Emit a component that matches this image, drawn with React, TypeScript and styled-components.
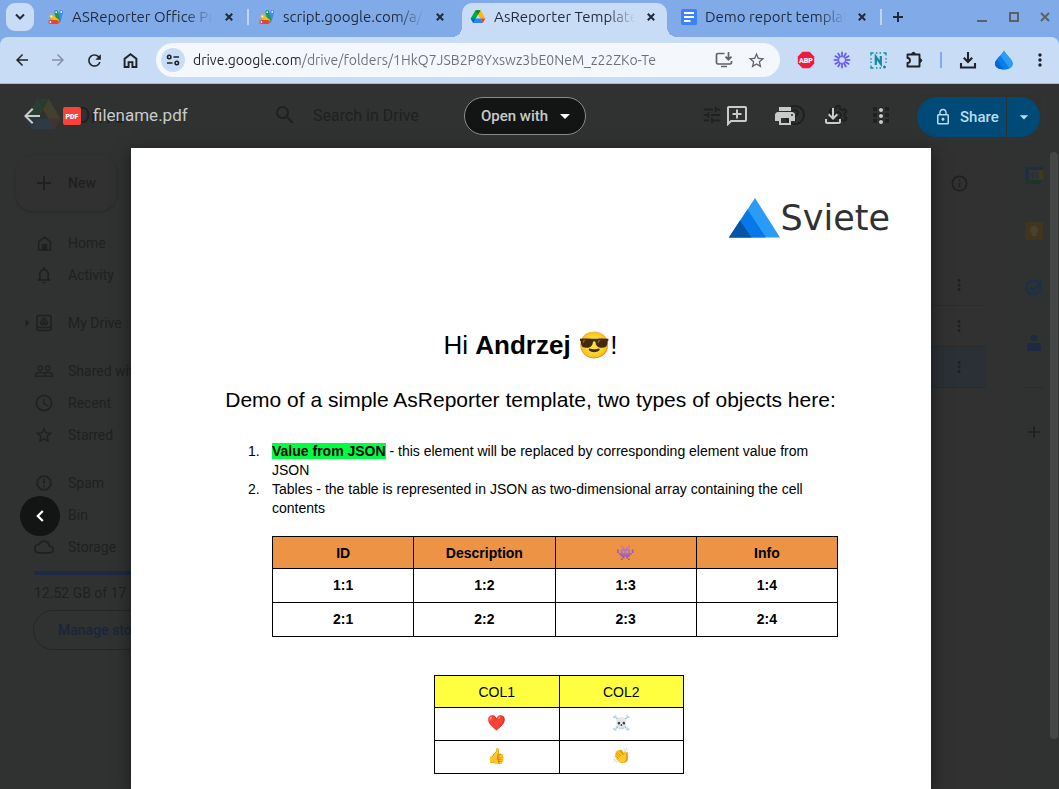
import React from "react";
import styled, { createGlobalStyle, css } from "styled-components";
import {
  MdAccessTime, MdAdd, MdApps, MdArrowBack, MdArrowDropDown, MdArrowForward, MdArrowRight,
  MdHelpOutline, MdInfoOutline, MdLockOutline, MdMoreVert, MdNotificationsNone, MdOutlineCloud,
  MdOutlineFileDownload, MdOutlineSettings, MdPeopleOutline, MdPrint, MdRefresh,
  MdReportGmailerrorred, MdSearch, MdStarBorder, MdTune,
} from "react-icons/md";

const uiFont = `"Ubuntu", "Noto Sans", "Open Sans", sans-serif`;
const appFont = `"Google Sans", Roboto, "Liberation Sans", sans-serif`;
const docFont = `Arial, "Liberation Sans", sans-serif`;

const GlobalStyle = createGlobalStyle`
  *, *::before, *::after { box-sizing: border-box; }
  body { margin: 0; background: #2f3231; }
  button, input { font: inherit; color: inherit; }
  button { padding: 0; border: 0; background: none; cursor: pointer; }
  svg { display: block; flex: none; }
`;

/* ---------- browser frame ---------- */

const Window = styled.div`
  display: flex;
  flex-direction: column;
  min-height: 100vh;
  overflow: hidden;
  background: #80abe8;
  font-family: ${uiFont};
`;

const TabStrip = styled.header`
  display: flex;
  align-items: flex-start;
  height: 37px;
  padding-left: 6px;
  color: #1f2a3c;
`;

const TabSearch = styled.button`
  display: grid;
  place-items: center;
  flex: none;
  width: 28px;
  height: 28px;
  margin: 3px 3px 0 0;
  border-radius: 9px;
  background: #c8dcf5;
`;

const Tab = styled.div<{ $active?: boolean; $divider?: boolean }>`
  position: relative;
  display: flex;
  align-items: center;
  gap: 8px;
  flex: 0 1 211px;
  min-width: 0;
  height: 34px;
  padding: 0 11px;
  margin-top: 3px;
  padding-bottom: 6px;
  ${(p) => p.$divider && css`
    &::after {
      content: "";
      position: absolute;
      right: -1px;
      top: 6px;
      width: 2px;
      height: 16px;
      background: #bdd4f4;
    }
  `}
  ${(p) => p.$active && css`
    margin-inline: 3px;
    flex-basis: 205px;
    padding-inline: 8px;
    border-radius: 10px 10px 0 0;
    background: #c8dcf5;
    &::before, &::after {
      content: "";
      position: absolute;
      bottom: 0;
      width: 10px;
      height: 10px;
    }
    &::before { left: -10px; background: radial-gradient(circle at 0 0, transparent 10px, #c8dcf5 10px); }
    &::after { right: -10px; background: radial-gradient(circle at 100% 0, transparent 10px, #c8dcf5 10px); }
  `}
`;

const TabTitle = styled.span`
  flex: 1;
  min-width: 0;
  overflow: hidden;
  white-space: nowrap;
  font-size: 15px;
  line-height: 20px;
  mask-image: linear-gradient(to right, #000 calc(100% - 28px), transparent);
`;

const TabClose = styled.button`
  display: grid;
  place-items: center;
  width: 16px;
  height: 16px;
`;

const NewTab = styled.button`
  display: grid;
  place-items: center;
  flex: none;
  width: 28px;
  height: 28px;
  margin: 3px 0 0 3px;
`;

const WindowButtons = styled.div`
  display: flex;
  flex: none;
  margin: 1px 0 0 auto;
  color: #5c6168;
  button { display: grid; place-items: center; width: 32px; height: 32px; }
  button:last-child { width: 29px; }
`;

const Toolbar = styled.div`
  display: flex;
  align-items: center;
  height: 47px;
  padding: 0 1px 0 4px;
  border-bottom: 1px solid #a4b7d1;
  border-radius: 8px 8px 0 0;
  background: #c8dcf5;
  color: #1f2227;
`;

const ToolButton = styled.button<{ $dim?: boolean }>`
  display: grid;
  place-items: center;
  flex: none;
  width: 36px;
  height: 34px;
  color: ${(p) => (p.$dim ? "#8592a8" : "inherit")};
`;

const Omnibox = styled.form`
  display: flex;
  align-items: center;
  flex: 1;
  min-width: 0;
  height: 34px;
  margin: 0 8px;
  padding: 0 8px 0 5px;
  border-radius: 17px;
  background: #f4f8fd;
  color: #5f6368;
`;

const SiteInfo = styled.button`
  display: grid;
  place-items: center;
  flex: none;
  width: 24px;
  height: 24px;
  margin-right: 8px;
  border-radius: 50%;
  background: #c8dcf5;
  color: #1f2227;
`;

const Address = styled.input`
  flex: 1;
  min-width: 0;
  padding: 0;
  border: 0;
  outline: 0;
  font-size: 14px;
  line-height: 20px;
  color: transparent;
  background: linear-gradient(to right, #1f2227 107px, #6b6f76 107px);
  background-clip: text;
`;

const OmniButton = styled.button`
  display: grid;
  place-items: center;
  flex: none;
  width: 32px;
  height: 24px;
`;

const ToolDivider = styled.span`
  width: 2px;
  height: 16px;
  margin: 0 8px;
  background: #80abe8;
`;

/* ---------- drive page behind the viewer ---------- */

const Content = styled.div`
  position: relative;
  display: flex;
  flex: 1;
  background: #2f3231;
  font-family: ${appFont};
`;

const Drive = styled.div`
  position: absolute;
  inset: 0;
  display: flex;
  flex-direction: column;
  overflow: hidden;
  color: #1f2020;
  font-size: 14px;
`;

const DriveHeader = styled.div`
  display: flex;
  align-items: center;
  height: 62px;
  margin-bottom: 2px;
  padding: 0 14px 0 24px;
`;

const DriveBrand = styled.div`
  display: flex;
  align-items: center;
  gap: 14px;
  width: 249px;
  font-size: 22px;
`;

const DriveSearch = styled.div`
  display: flex;
  align-items: center;
  gap: 16px;
  flex: 1;
  input {
    flex: 1;
    min-width: 0;
    padding: 0;
    border: 0;
    background: none;
    font-size: 16px;
  }
  input::placeholder { color: #1f2020; opacity: 1; }
`;

const DriveTools = styled.div`
  display: flex;
  gap: 19px;
  margin: 0 20px 0 60px;
`;

const Account = styled.div`
  width: 132px;
  height: 47px;
  border: 1px solid #353333;
  border-radius: 10px;
`;

const DriveBody = styled.div`
  display: flex;
  flex: 1;
`;

const Sidebar = styled.nav`
  width: 240px;
  padding: 7px 0 0 16px;
`;

const NewButton = styled.button`
  display: flex;
  align-items: center;
  gap: 12px;
  height: 56px;
  margin-bottom: 16px;
  padding: 0 20px 0 16px;
  border-radius: 16px;
  background: #323131;
  box-shadow: 0 1px 3px rgba(0, 0, 0, 0.2);
  font-weight: 500;
`;

const NavGroup = styled.div`
  margin-bottom: 16px;
`;

const NavItem = styled.a`
  display: flex;
  align-items: center;
  height: 32px;
  color: inherit;
  text-decoration: none;
  white-space: nowrap;
`;

const NavArrow = styled.span`
  display: grid;
  place-items: center;
  width: 18px;
  margin-left: 2px;
  margin-right: -2px;
`;

const NavIcon = styled.span`
  display: grid;
  place-items: center;
  width: 20px;
  margin-right: 14px;
`;

const StorageMeter = styled.div`
  height: 4px;
  margin: -8px 0 10px 18px;
  border-radius: 2px;
  background: #1c2a44;
`;

const StorageText = styled.p`
  margin: 0 0 8px 18px;
  line-height: 17px;
`;

const ManageButton = styled.button`
  height: 40px;
  margin-left: 17px;
  padding: 0 24px;
  border: 1px solid #252727;
  border-radius: 20px;
  color: #1b2538;
  font-weight: 500;
`;

const Files = styled.main`
  flex: 1;
  padding-right: 16px;
  border-radius: 16px;
  background: #313131;
`;

const FilesHead = styled.div`
  display: flex;
  justify-content: flex-end;
  align-items: center;
  height: 70px;
  padding-right: 17px;
  margin-bottom: 47px;
`;

const FileRow = styled.div<{ $selected?: boolean }>`
  display: flex;
  justify-content: flex-end;
  align-items: center;
  height: 41px;
  padding-right: 18px;
  border-bottom: 1px solid #2b2b2b;
  background: ${(p) => (p.$selected ? "#2b3036" : "transparent")};
`;

const Rail = styled.aside`
  display: flex;
  flex-direction: column;
  align-items: center;
  gap: 36px;
  width: 57px;
  padding: 17px 0 0 7px;
`;

const RailItem = styled.span`
  display: grid;
  place-items: center;
  width: 20px;
  height: 20px;
`;

const RailRule = styled.hr`
  width: 20px;
  margin: -2px 0;
  border: 0;
  border-top: 1px solid #2a2c2b;
`;

const ScrollThumb = styled.div`
  position: absolute;
  top: 68px;
  right: 1px;
  bottom: 51px;
  width: 8px;
  border-radius: 4px;
  background: #454746;
`;

/* ---------- pdf viewer ---------- */

const Viewer = styled.div`
  position: relative;
  display: flex;
  flex: 1;
  flex-direction: column;
  min-width: 0;
`;

const ViewerBar = styled.div`
  display: grid;
  grid-template-columns: 1fr auto 1fr;
  align-items: center;
  height: 64px;
  padding: 0 19px 0 10px;
  color: #c9cbca;
`;

const FileInfo = styled.div`
  display: flex;
  align-items: center;
  min-width: 0;
`;

const BackButton = styled.button`
  display: grid;
  place-items: center;
  width: 44px;
  height: 44px;
  margin-right: 9px;
`;

const FileName = styled.h1`
  margin: 0 0 2px 12px;
  font-size: 17px;
  line-height: 24px;
  font-weight: 400;
`;

const OpenWith = styled.button`
  display: flex;
  align-items: center;
  gap: 5px;
  height: 38px;
  padding: 0 8px 0 16px;
  border: 1px solid #8b8d8c;
  border-radius: 19px;
  background: #131414;
  font-size: 15px;
  font-weight: 500;
  svg { color: #fff; }
`;

const ViewerActions = styled.div`
  display: flex;
  align-items: center;
  justify-content: flex-end;
`;

const ActionButton = styled.button`
  display: grid;
  place-items: center;
  width: 48px;
  height: 40px;
`;

const ShareGroup = styled.div`
  display: flex;
  gap: 1px;
  height: 40px;
  margin: 2px 0 0 12px;
  color: #b9dcf5;
  font-size: 15px;
  font-weight: 500;
  button { display: flex; align-items: center; background: #004a77; }
`;

const ShareButton = styled.button`
  gap: 8px;
  width: 89px;
  padding-left: 17px;
  border-radius: 20px 0 0 20px;
`;

const ShareMenu = styled.button`
  justify-content: center;
  width: 33px;
  border-radius: 0 20px 20px 0;
`;

const PreviousFile = styled.button`
  position: absolute;
  top: 412px;
  left: 20px;
  display: grid;
  place-items: center;
  width: 40px;
  height: 40px;
  border-radius: 50%;
  background: #131414;
  color: #fff;
`;

const Stage = styled.div`
  display: flex;
  flex: 1;
  justify-content: center;
  padding-left: 3px;
`;

const Paper = styled.article`
  flex: 0 1 800px;
  min-width: 0;
  padding: 48px 41px 16px 40px;
  background: #fff;
  box-shadow: 0 4px 16px rgba(0, 0, 0, 0.5);
  color: #000;
  font-family: ${docFont};
`;

const Logo = styled.div`
  display: flex;
  align-items: flex-start;
  justify-content: flex-end;
  gap: 1px;
  height: 42px;
  color: #303133;
  font: 400 35px/44px "DejaVu Sans", sans-serif;
  svg { margin-top: 2px; }
`;

const Greeting = styled.h2`
  margin: 92px 0 0;
  text-align: center;
  font-size: 26px;
  line-height: 30px;
  font-weight: 400;
`;

const Lead = styled.p`
  margin: 28px 0 0;
  text-align: center;
  font-size: 21px;
  line-height: 24px;
`;

const Points = styled.ol`
  margin: 30px 50px 18px 77px;
  padding-left: 24px;
  list-style: none;
  counter-reset: point;
  font-size: 14px;
  line-height: 19px;
  li::before {
    counter-increment: point;
    content: counter(point) ".";
    display: inline-block;
    width: 24px;
    margin-left: -24px;
  }
  mark { background: #00ff40; color: inherit; font-weight: 700; }
`;

const Grid = styled.table<{ $head: string; $row: number; $bold?: boolean }>`
  border-collapse: collapse;
  table-layout: fixed;
  text-align: center;
  font-size: 14px;
  line-height: 20px;
  font-weight: ${(p) => (p.$bold ? 700 : 400)};
  th, td { height: ${(p) => p.$row}px; padding: 0; border: 1px solid #000; }
  td { padding-bottom: 2px; }
  th { height: 32px; background: ${(p) => p.$head}; font-weight: inherit; }
`;

const ReportTable = styled(Grid)`
  width: 566px;
  margin: 0 0 38px 101px;
`;

const EmojiTable = styled(Grid)`
  width: 250px;
  margin-left: 263px;
`;

const Emoji = styled.span<{ $size: number }>`
  font-family: "Noto Color Emoji", sans-serif;
  font-size: ${(p) => p.$size}px;
  font-weight: 400;
`;

/* ---------- drawings ---------- */

const AppsScriptIcon = () => (
  <svg width="16" height="16" viewBox="0 0 16 16">
    <path d="M13.3 3 10.8 11.8" stroke="#4285f4" strokeWidth="3.8" strokeLinecap="round" />
    <path d="M8.300 3.200 10.300 11" stroke="#109d58" strokeWidth="3.800" strokeLinecap="round" />
    <path d="M3.200 7.200 9.500 12" stroke="#fbbc04" strokeWidth="3.600" strokeLinecap="round" />
    <path d="M2.200 13h6.800" stroke="#ea4335" strokeWidth="3.800" strokeLinecap="round" />
    <g fill="#fff">
      <circle cx="13.300" cy="2.900" r=".9" /><circle cx="8.200" cy="3.200" r=".9" />
      <circle cx="3.400" cy="7.400" r=".9" /><circle cx="2.400" cy="13" r=".9" />
    </g>
  </svg>
);

const DriveIcon = ({ size = 16, dim = false }: { size?: number; dim?: boolean }) => (
  <svg width={size} height={size} viewBox="0 0 24 24" opacity={dim ? 0.1 : 1}>
    <path d="M8.2 2h7.6L8.6 14.4 4.8 21 1 14.4z" fill="#00ac47" />
    <path d="M8.2 2h7.6L23 14.4h-7.6z" fill="#ffba00" />
    <path d="M8.2 2h7.6L12 8.6z" fill="#00832d" />
    <path d="M4.8 21 8.6 14.4h6.8L19.2 21z" fill="#2684fc" />
    <path d="M15.4 14.4H23L19.2 21z" fill="#ea4335" />
    <path d="M1 14.4h7.6L4.8 21z" fill="#0066da" />
  </svg>
);

const DocsIcon = () => (
  <svg width="16" height="16" viewBox="0 0 16 16">
    <rect width="16" height="16" rx="1.5" fill="#3c82f4" />
    <path d="M3 4h10M3 8h10M3 12h6.5" stroke="#fff" strokeWidth="1.8" />
  </svg>
);

const CloseIcon = ({ size = 8, weight = 2 }: { size?: number; weight?: number }) => (
  <svg width={size} height={size} viewBox="0 0 8 8">
    <path d="m.8.8 6.4 6.4m0-6.4L.8 7.2" stroke="currentColor" strokeWidth={weight} />
  </svg>
);

const HomeIcon = ({ solid = false, size = 14 }: { solid?: boolean; size?: number }) => (
  <svg width={size} height={size} viewBox="0 0 14 14" fill="none" stroke="currentColor" strokeWidth={solid ? 1.5 : 1.8}>
    <path d="M1.5 13V5.3L7 1.2l5.500 4.1V13H8.800V8.500H5.200V13z" />
    {solid && <path d="M5.500 8.500h3V13h-3z" fill="currentColor" />}
  </svg>
);

const SiteControlsIcon = () => (
  <svg width="14" height="12" viewBox="0 0 14 12" fill="none" stroke="currentColor" strokeWidth="1.6">
    <circle cx="3.200" cy="3" r="1.700" /><path d="M7.500 3H13M1 9h5.500" /><circle cx="10.800" cy="9" r="1.700" />
  </svg>
);

const InstallIcon = () => (
  <svg width="18" height="16" viewBox="0 0 18 16" fill="none" stroke="currentColor" strokeWidth="1.700">
    <path d="M9.500 1.500H3A1.500 1.500 0 0 0 1.500 3v7.500A1.500 1.500 0 0 0 3 12h12a1.500 1.500 0 0 0 1.500-1.500V9M6 14.500h6M13.500 0v7.500M10.500 4.700l3 3 3-3" />
  </svg>
);

const AbpIcon = () => (
  <svg width="18" height="18" viewBox="0 0 18 18">
    <path d="M5.500.8h7l4.700 4.700v7l-4.700 4.700h-7L.8 12.500v-7z" fill="#f5173f" />
    <text x="9" y="11.700" textAnchor="middle" fontFamily="Roboto, sans-serif" fontSize="7" fontWeight="900" fill="#fff">ABP</text>
  </svg>
);

const BurstIcon = () => (
  <svg width="18" height="18" viewBox="-9 -9 18 18" stroke="#6757f0" strokeWidth="1.700">
    {Array.from({ length: 12 }, (_, i) => (
      <path key={i} d="M0-3.500V-8.300" transform={`rotate(${i * 30})`} />
    ))}
    <circle r="3.500" fill="none" strokeWidth="1" />
  </svg>
);

const NimbusIcon = () => (
  <svg width="17" height="17" viewBox="0 0 17 17" fill="none" stroke="#0b8c9c">
    <path d="M1 3.500V1h2.500M6 1h1.500M9.500 1H11M13.500 1H16v2.500M16 6v1.500M16 9.500V11M1 6v1.500M1 9.500V11M1 13.500V16h2.500M6 16h1.500M9.500 16H11M13 15h3M14.500 13.500v3" strokeWidth="1.300" />
    <path d="M5.800 13V4.800l5 7V4" strokeWidth="2.200" />
  </svg>
);

const PuzzleIcon = () => (
  <svg width="18" height="18" viewBox="0 0 18 18" fill="none" stroke="currentColor" strokeWidth="1.900" strokeLinejoin="round">
    <path d="M2.500 3.500H14.500V15.500H2.500V12a2.400 2.400 0 0 0 0-5z" />
    <path d="M6.800 3a1.700 1.700 0 0 1 3.400 0zM15 7.800a1.700 1.700 0 0 1 0 3.400z" fill="currentColor" strokeWidth="1" />
  </svg>
);

const TrayDownloadIcon = () => (
  <svg width="18" height="18" viewBox="0 0 18 18" fill="none" stroke="currentColor" strokeWidth="2.100">
    <path d="M9 1v9.500M4.800 6.800 9 11l4.200-4.200M2 12v4.500h14V12" />
  </svg>
);

const DropIcon = () => (
  <svg width="20" height="20" viewBox="0 0 20 20">
    <path d="M10 .5c3 4.500 9 9.500 9 13.300 0 3.700-4.500 5.700-9 5.700s-9-2-9-5.700C1 10 7 5 10 .5z" fill="#2b9bf8" />
    <path d="M6.300 5.500 15.500 18.300c-1.500.8-3.500 1.200-5.500 1.200-4.500 0-9-2-9-5.700 0-2.800 2.700-5.500 5.300-8.300z" fill="#0b7de8" />
    <path d="M3 9.500 9.500 19.500C5.200 19.500 1 17.500 1 13.800 1 12.300 1.800 11 3 9.500z" fill="#0568cc" />
  </svg>
);

const CommentAddIcon = () => (
  <svg width="20" height="20" viewBox="0 0 20 20" fill="none" stroke="currentColor" strokeWidth="2">
    <path d="M1 18V1.800A.8.8 0 0 1 1.800 1h16.400a.8.800 0 0 1 .8.800v12.400a.8.800 0 0 1-.8.800H4z" />
    <path d="M10 3.500v9M5.500 8h9" />
  </svg>
);

const PdfIcon = () => (
  <svg width="18" height="18" viewBox="0 0 18 18">
    <rect width="18" height="18" rx="2" fill="#f6433a" />
    <text x="9" y="11.500" textAnchor="middle" fontFamily="Roboto, sans-serif" fontSize="7" fontWeight="900" fill="#fff">PDF</text>
  </svg>
);

const DriveBoxIcon = () => (
  <svg width="20" height="20" viewBox="0 0 20 20" fill="none" stroke="currentColor" strokeWidth="1.500">
    <rect x="3" y="2.500" width="14" height="15" rx="1" />
    <path d="M3 14.500h14" />
    <path d="m9 5.500-2.500 4.500 1 1.500h5l1-1.500L11 5.500zM10 8.500l.8 1.300H9.200z" />
  </svg>
);

const TriangleLogo = () => (
  <svg width="51" height="40" viewBox="0 0 51 40">
    <path d="M26 0 51 39.500H0z" fill="#2b9bf8" />
    <path d="M18.500 11.500 37 39.500H0z" fill="#0878e8" />
    <path d="M11 22.500 22.500 39.500H0z" fill="#0455a8" />
  </svg>
);

const CalendarIcon = () => (
  <svg width="18" height="18" viewBox="0 0 18 18">
    <path d="M0 1h18v13l-4 4H0z" fill="#1f2d42" />
    <path d="M14 4h4v10h-4z" fill="#3f3921" /><path d="M0 14h14v4H0z" fill="#1f3527" /><path d="M4 4h10v10H4z" fill="#333435" />
    <text x="9" y="12" textAnchor="middle" fontSize="8" fill="#1f2d42">31</text>
  </svg>
);

const KeepIcon = () => (
  <svg width="20" height="20" viewBox="0 0 20 20">
    <rect x="1" y="1" width="18" height="18" rx="2" fill="#40361f" />
    <circle cx="10" cy="9" r="4" fill="#4a412c" /><path d="M8 12h4v3H8z" fill="#4a412c" />
  </svg>
);

const TasksIcon = () => (
  <svg width="18" height="18" viewBox="0 0 18 18" fill="none" stroke="#1e3048" strokeWidth="2.600">
    <circle cx="8.500" cy="9.500" r="6.800" /><path d="m5.200 9 3.300 3.300L16.500 3" />
  </svg>
);

const ContactIcon = () => (
  <svg width="18" height="18" viewBox="0 0 18 18" fill="#1f2a40">
    <circle cx="9" cy="4" r="3.300" /><path d="M2 17v-4a4 4 0 0 1 4-4h6a4 4 0 0 1 4 4v4z" />
  </svg>
);

/* ---------- data ---------- */

const tabs = [
  { title: "ASReporter Office Pr", icon: <AppsScriptIcon />, divider: true },
  { title: "script.google.com/a/", icon: <AppsScriptIcon /> },
  { title: "AsReporter Template", icon: <DriveIcon />, active: true },
  { title: "Demo report template", icon: <DocsIcon />, divider: true },
];

const navGroups = [
  [
    { label: "Home", icon: <HomeIcon solid size={15} /> },
    { label: "Activity", icon: <MdNotificationsNone size={20} /> },
  ],
  [{ label: "My Drive", icon: <DriveBoxIcon />, arrow: true }],
  [
    { label: "Shared with me", icon: <MdPeopleOutline size={20} /> },
    { label: "Recent", icon: <MdAccessTime size={20} /> },
    { label: "Starred", icon: <MdStarBorder size={20} /> },
  ],
  [
    { label: "Spam", icon: <MdReportGmailerrorred size={20} /> },
    { label: "Bin", icon: null },
    { label: "Storage", icon: <MdOutlineCloud size={20} /> },
  ],
];

const railApps = [CalendarIcon, KeepIcon, TasksIcon, ContactIcon];

const reportHead = ["ID", "Description", "👾", "Info"];
const reportRows = [
  ["1:1", "1:2", "1:3", "1:4"],
  ["2:1", "2:2", "2:3", "2:4"],
];
const emojiRows = [
  ["❤️", "☠️"],
  ["👍", "👏"],
];

export default function App() {
  return (
    <Window>
      <GlobalStyle />
      <TabStrip>
        <TabSearch aria-label="Search tabs">
          <svg width="10" height="8" viewBox="0 0 10 8" fill="none" stroke="currentColor" strokeWidth="2"><path d="m1 1.500 4 4 4-4" /></svg>
        </TabSearch>
        {tabs.map((tab) => (
          <Tab key={tab.title} $active={tab.active} $divider={tab.divider}>
            {tab.icon}
            <TabTitle>{tab.title}</TabTitle>
            <TabClose aria-label={`Close ${tab.title}`}><CloseIcon /></TabClose>
          </Tab>
        ))}
        <NewTab aria-label="New tab">
          <svg width="10" height="10" viewBox="0 0 10 10" stroke="currentColor" strokeWidth="2"><path d="M5 0v10M0 5h10" /></svg>
        </NewTab>
        <WindowButtons>
          <button aria-label="Minimise"><svg width="10" height="10" viewBox="0 0 10 10"><path d="M0 8h10v2H0z" fill="currentColor" /></svg></button>
          <button aria-label="Maximise"><svg width="10" height="10" viewBox="0 0 10 10"><path d="M1 1h8v8H1z" fill="none" stroke="currentColor" strokeWidth="2" /></svg></button>
          <button aria-label="Close window"><CloseIcon size={10} weight={1.6} /></button>
        </WindowButtons>
      </TabStrip>

      <Toolbar>
        <ToolButton aria-label="Back"><MdArrowBack size={18} /></ToolButton>
        <ToolButton aria-label="Forward" $dim><MdArrowForward size={18} /></ToolButton>
        <ToolButton aria-label="Reload"><MdRefresh size={19} /></ToolButton>
        <ToolButton aria-label="Home"><HomeIcon size={15} /></ToolButton>
        <Omnibox>
          <SiteInfo type="button" aria-label="Site information"><SiteControlsIcon /></SiteInfo>
          <Address aria-label="Address" defaultValue="drive.google.com/drive/folders/1HkQ7JSB2P8Yxswz3bE0NeM_z22ZKo-Te" />
          <OmniButton type="button" aria-label="Install"><InstallIcon /></OmniButton>
          <OmniButton type="button" aria-label="Bookmark"><MdStarBorder size={19} /></OmniButton>
        </Omnibox>
        <ToolButton aria-label="Adblock Plus"><AbpIcon /></ToolButton>
        <ToolButton aria-label="Burst extension"><BurstIcon /></ToolButton>
        <ToolButton aria-label="Nimbus"><NimbusIcon /></ToolButton>
        <ToolButton aria-label="Extensions"><PuzzleIcon /></ToolButton>
        <ToolDivider />
        <ToolButton aria-label="Downloads"><TrayDownloadIcon /></ToolButton>
        <ToolButton aria-label="Profile"><DropIcon /></ToolButton>
        <ToolButton aria-label="Browser menu"><MdMoreVert size={20} /></ToolButton>
      </Toolbar>

      <Content>
        <Drive inert>
          <DriveHeader>
            <DriveBrand><DriveIcon size={38} dim />Drive</DriveBrand>
            <DriveSearch>
              <MdSearch size={24} />
              <input aria-label="Search in Drive" placeholder="Search in Drive" />
              <MdTune size={22} />
            </DriveSearch>
            <DriveTools>
              <MdHelpOutline size={24} />
              <MdOutlineSettings size={24} />
              <MdApps size={24} />
            </DriveTools>
            <Account />
          </DriveHeader>
          <DriveBody>
            <Sidebar>
              <NewButton><MdAdd size={24} />New</NewButton>
              {navGroups.map((group, i) => (
                <NavGroup key={i}>
                  {group.map((item) => (
                    <NavItem key={item.label} href="#">
                      <NavArrow>{"arrow" in item && item.arrow && <MdArrowRight size={18} />}</NavArrow>
                      <NavIcon>{item.icon}</NavIcon>
                      {item.label}
                    </NavItem>
                  ))}
                </NavGroup>
              ))}
              <StorageMeter />
              <StorageText>12.52 GB of 17 GB used</StorageText>
              <ManageButton>Manage storage</ManageButton>
            </Sidebar>
            <Files>
              <FilesHead><MdInfoOutline size={19} /></FilesHead>
              <FileRow><MdMoreVert size={18} /></FileRow>
              <FileRow><MdMoreVert size={18} /></FileRow>
              <FileRow $selected><MdMoreVert size={18} /></FileRow>
            </Files>
            <Rail>
              {railApps.map((Icon, i) => (
                <RailItem key={i}><Icon /></RailItem>
              ))}
              <RailRule />
              <MdAdd size={20} />
            </Rail>
          </DriveBody>
          <ScrollThumb />
        </Drive>

        <Viewer>
          <ViewerBar>
            <FileInfo>
              <BackButton aria-label="Close viewer"><MdArrowBack size={24} /></BackButton>
              <PdfIcon />
              <FileName>filename.pdf</FileName>
            </FileInfo>
            <OpenWith>Open with <MdArrowDropDown size={24} /></OpenWith>
            <ViewerActions>
              <ActionButton aria-label="Add a comment"><CommentAddIcon /></ActionButton>
              <ActionButton aria-label="Print"><MdPrint size={24} /></ActionButton>
              <ActionButton aria-label="Download"><MdOutlineFileDownload size={24} /></ActionButton>
              <ActionButton aria-label="More actions"><MdMoreVert size={24} /></ActionButton>
              <ShareGroup>
                <ShareButton><MdLockOutline size={18} />Share</ShareButton>
                <ShareMenu aria-label="Share options"><MdArrowDropDown size={20} /></ShareMenu>
              </ShareGroup>
            </ViewerActions>
          </ViewerBar>
          <Stage>
            <Paper>
              <Logo><TriangleLogo />Sviete</Logo>
              <Greeting>Hi <b>Andrzej</b> <Emoji $size={26}>😎</Emoji>!</Greeting>
              <Lead>Demo of a simple AsReporter template, two types of objects here:</Lead>
              <Points>
                <li><mark>Value from JSON</mark> - this element will be replaced by corresponding element value from JSON</li>
                <li>Tables - the table is represented in JSON as two-dimensional array containing the cell contents</li>
              </Points>
              <ReportTable $head="#ed9345" $row={34} $bold>
                <thead>
                  <tr>{reportHead.map((h) => <th key={h}>{h === "👾" ? <Emoji $size={15}>{h}</Emoji> : h}</th>)}</tr>
                </thead>
                <tbody>
                  {reportRows.map((row) => (
                    <tr key={row[0]}>{row.map((cell) => <td key={cell}>{cell}</td>)}</tr>
                  ))}
                </tbody>
              </ReportTable>
              <EmojiTable $head="#ffff40" $row={33}>
                <thead>
                  <tr><th>COL1</th><th>COL2</th></tr>
                </thead>
                <tbody>
                  {emojiRows.map((row) => (
                    <tr key={row[0]}>{row.map((cell) => <td key={cell}><Emoji $size={15}>{cell}</Emoji></td>)}</tr>
                  ))}
                </tbody>
              </EmojiTable>
            </Paper>
          </Stage>
          <PreviousFile aria-label="Previous file">
            <svg width="8" height="12" viewBox="0 0 8 12" fill="none" stroke="currentColor" strokeWidth="2.200"><path d="M6.800 1 1.800 6l5 5" /></svg>
          </PreviousFile>
        </Viewer>
      </Content>
    </Window>
  );
}
